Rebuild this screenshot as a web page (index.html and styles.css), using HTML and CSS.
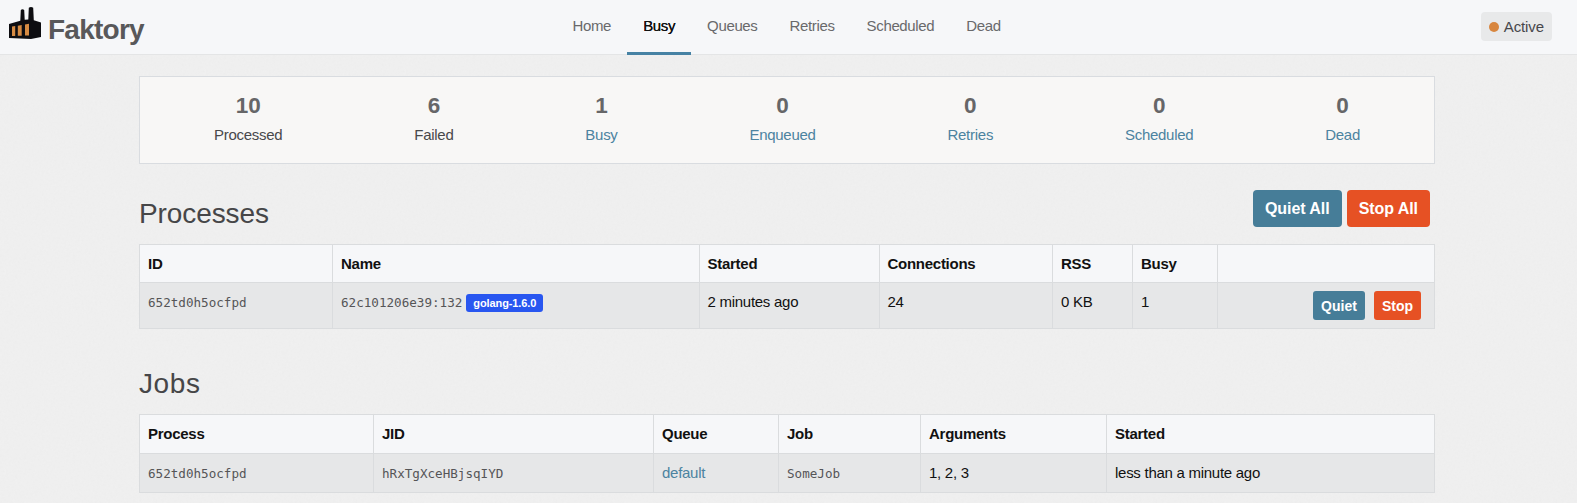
FILE: index.html
```html
<!DOCTYPE html>
<html lang="en">
<head>
<meta charset="utf-8">
<title>Faktory</title>
<link rel="stylesheet" href="styles.css">
</head>
<body>
<header class="navbar">
  <a class="brand">
    <svg class="logo" width="34" height="36" viewBox="0 0 34 36">
      <path fill="#0d0d11" d="M1 17 L12.300 13.800 L12.800 3 Q14.500 1.500 16.200 3 L16.700 12.800 L20.300 12.500 L20.800 .8 Q23 -.6 25.200 .8 L25.800 13.200 L33 15.500 V30 L23 32 L1 31Z"/>
      <path fill="#d68b43" d="M4 19.600 L7.200 19 V29 H4Z M9.800 18.800 L13.700 18 V28.800 H9.800Z M17 17.500 L21 16.800 V28.600 H17Z"/>
    </svg>
    <span class="brand-name">Faktory</span>
  </a>
  <nav class="nav">
    <a class="nav-link">Home</a>
    <a class="nav-link active">Busy</a>
    <a class="nav-link">Queues</a>
    <a class="nav-link">Retries</a>
    <a class="nav-link">Scheduled</a>
    <a class="nav-link">Dead</a>
  </nav>
  <div class="status"><span class="dot"></span>Active</div>
</header>
<main class="page">
  <section class="summary">
    <div class="stat"><b class="count">10</b><span>Processed</span></div>
    <div class="stat"><b class="count">6</b><span>Failed</span></div>
    <div class="stat"><b class="count">1</b><a class="link">Busy</a></div>
    <div class="stat"><b class="count">0</b><a class="link">Enqueued</a></div>
    <div class="stat"><b class="count">0</b><a class="link">Retries</a></div>
    <div class="stat"><b class="count">0</b><a class="link">Scheduled</a></div>
    <div class="stat"><b class="count">0</b><a class="link">Dead</a></div>
  </section>
  <div class="heading">
    <h3 class="title">Processes</h3>
    <div class="bulk"><button class="btn large">Quiet All</button><button class="btn large danger">Stop All</button></div>
  </div>
  <table class="table processes">
    <colgroup><col class="p-id"><col class="p-name"><col class="p-started"><col class="p-conn"><col class="p-rss"><col class="p-busy"><col></colgroup>
    <thead><tr><th>ID</th><th>Name</th><th>Started</th><th>Connections</th><th>RSS</th><th>Busy</th><th></th></tr></thead>
    <tbody><tr>
      <td><code class="code">652td0h5ocfpd</code></td>
      <td><code class="code">62c101206e39:132</code><span class="label">golang-1.6.0</span></td>
      <td>2 minutes ago</td><td>24</td><td>0 KB</td><td>1</td>
      <td class="action-cell"><div class="actions"><button class="btn">Quiet</button><button class="btn danger">Stop</button></div></td>
    </tr></tbody>
  </table>
  <div class="heading jobs-heading"><h3 class="title jobs-title">Jobs</h3></div>
  <table class="table jobs">
    <colgroup><col class="j-process"><col class="j-jid"><col class="j-queue"><col class="j-job"><col class="j-args"><col></colgroup>
    <thead><tr><th>Process</th><th>JID</th><th>Queue</th><th>Job</th><th>Arguments</th><th>Started</th></tr></thead>
    <tbody><tr>
      <td><code class="code">652td0h5ocfpd</code></td>
      <td><code class="code">hRxTgXceHBjsqIYD</code></td>
      <td><a class="link">default</a></td>
      <td><code class="code">SomeJob</code></td>
      <td>1, 2, 3</td><td>less than a minute ago</td>
    </tr></tbody>
  </table>
</main>
</body>
</html>
```
FILE: styles.css
```css
* { box-sizing: border-box; }
html { overflow: hidden; }
body {
  margin: 0;
  height: 503px;
  overflow: hidden;
  color: #111;
  font: 15px/20px "Liberation Sans", Arial, sans-serif;
  letter-spacing: -.27px;
  background: #f0f0f0 url("data:image/svg+xml,%3Csvg xmlns='http://www.w3.org/2000/svg' width='200' height='200'%3E%3Cfilter id='n'%3E%3CfeTurbulence type='fractalNoise' baseFrequency='.45' numOctaves='2' stitchTiles='stitch'/%3E%3CfeColorMatrix type='saturate' values='0'/%3E%3C/filter%3E%3Crect width='200' height='200' filter='url(%23n)' opacity='.035'/%3E%3C/svg%3E");
}
.navbar {
  display: grid;
  grid-template-columns: 556.5px 1fr auto;
  height: 55px;
  padding-right: 25px;
  background: #f6f7f9;
  border-bottom: 1px solid #e4e5e6;
}
.brand { display: flex; padding: 7px 0 0 8px; }
.brand-name {
  margin-left: 6px;
  padding-top: 6px;
  color: #58585a;
  font-size: 28px;
  font-weight: 700;
  line-height: 34px;
  letter-spacing: -.75px;
}
.nav { display: flex; letter-spacing: -.35px; }
.nav-link { height: 55px; padding: 16px 16px 0; color: #69696b; }
.nav-link.active { color: #111; border-bottom: 3px solid #4682a4; text-shadow: 0 0 .5px #111; }
.status {
  display: flex;
  align-items: center;
  height: 29px;
  margin-top: 12px;
  padding: 1px 8px 0;
  border-radius: 4px;
  background: #e8e9ea;
  color: #47474a;
  letter-spacing: -.1px;
}
.dot { width: 10px; height: 10px; margin-right: 5px; border-radius: 50%; background: #d8863f; }
.page { width: 1296px; margin: 21px 0 0 139px; }
.summary {
  display: flex;
  justify-content: space-between;
  height: 88px;
  padding: 17px 74px 0;
  border: 1px solid #d9dce0;
  background: #f8f7f6;
}
.stat { display: flex; flex-direction: column; align-items: center; gap: 7px; color: #48484b; }
.count { color: #666668; font-size: 22.500px; line-height: 24px; letter-spacing: 0; }
.link { color: #4c83a0; }
.heading { display: flex; justify-content: space-between; height: 80px; padding-top: 26px; }
.title { margin: 8px 0 0; color: #464648; font-size: 28px; font-weight: 400; line-height: 31px; letter-spacing: -.1px; }
.jobs-title { letter-spacing: .6px; }
.bulk { display: flex; gap: 5px; padding-right: 5px; }
.btn {
  height: 29px;
  padding: 0 8px;
  border: 0;
  border-radius: 3px;
  background: #467d98;
  color: #fff;
  font: 700 14px/20px "Liberation Sans", Arial, sans-serif;
}
.btn.large { height: 37px; padding: 0 12px; border-radius: 4px; font-size: 16px; letter-spacing: -.06px; }
.danger { background: #e65124; }
.table { width: 1296px; border-collapse: collapse; table-layout: fixed; }
.table th, .table td {
  height: 39px;
  padding: 9px 8px;
  border: 1px solid #dadcde;
  text-align: left;
  vertical-align: top;
}
.table th { background: #f6f7f9; }
.table td { background: #e6e7e8; }
.processes th { height: 38px; padding-bottom: 8px; }
.processes td { height: 46px; padding-bottom: 0; }
.processes .action-cell { padding-top: 8px; }
.p-id { width: 193px; }
.p-name { width: 366.5px; }
.p-started { width: 180px; }
.p-conn { width: 173.5px; }
.p-rss { width: 80px; }
.p-busy { width: 85px; }
.j-process { width: 234px; }
.j-jid { width: 280px; }
.j-queue { width: 125px; }
.j-job { width: 142px; }
.j-args { width: 186px; }
.code { color: #555557; font: 12.6px/20px "DejaVu Sans Mono", monospace; letter-spacing: 0; }
.label {
  display: inline-block;
  height: 18px;
  margin-left: 4px;
  padding: 0 7px;
  border-radius: 3px;
  background: #2856f0;
  color: #fff;
  font-size: 11px;
  font-weight: 700;
  line-height: 18px;
  letter-spacing: -.1px;
}
.actions { display: flex; justify-content: flex-end; gap: 9px; padding-right: 5px; }
.jobs-heading { height: 85px; padding-top: 31px; }
.jobs td { height: 38px; padding-bottom: 8px; }
```
